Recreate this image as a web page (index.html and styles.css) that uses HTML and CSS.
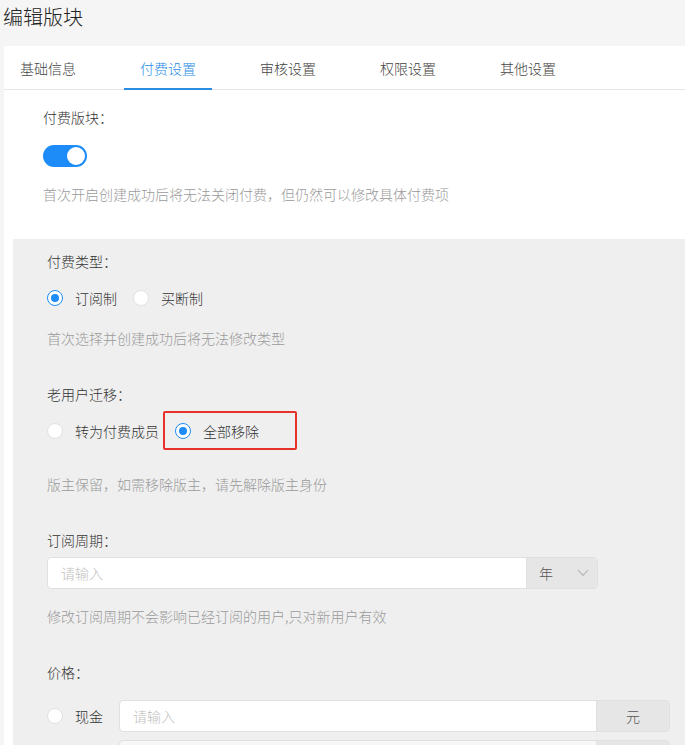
FILE: index.html
```html
<!DOCTYPE html>
<html lang="zh-CN">
<head>
<meta charset="utf-8">
<title>编辑版块</title>
<link rel="stylesheet" href="styles.css">
</head>
<body>
<h1 class="page-title">编辑版块</h1>
<div class="card">
  <nav class="tabs">
    <span class="tab">基础信息</span>
    <span class="tab active">付费设置</span>
    <span class="tab">审核设置</span>
    <span class="tab">权限设置</span>
    <span class="tab">其他设置</span>
  </nav>

  <section class="block-top">
    <div class="label">付费版块：</div>
    <div class="switch on"><span class="knob"></span></div>
    <div class="hint hint-first">首次开启创建成功后将无法关闭付费，但仍然可以修改具体付费项</div>
  </section>

  <section class="block-pay">
    <div class="label">付费类型：</div>
    <div class="radio-row row-type">
      <label class="radio checked"><span class="dot"></span>订阅制</label>
      <label class="radio"><span class="dot"></span>买断制</label>
    </div>
    <div class="hint hint-type">首次选择并创建成功后将无法修改类型</div>

    <div class="label label-gap">老用户迁移：</div>
    <div class="radio-row row-migrate">
      <label class="radio"><span class="dot"></span>转为付费成员</label>
      <label class="radio checked marked"><span class="dot"></span>全部移除</label>
    </div>
    <div class="hint hint-migrate">版主保留，如需移除版主，请先解除版主身份</div>

    <div class="label label-gap">订阅周期：</div>
    <div class="input-group period">
      <div class="input">请输入</div>
      <div class="addon select">年<svg class="chev" viewBox="0 0 12 8" width="12" height="8"><path d="M1 1.2 L6 6.5 L11 1.2" fill="none" stroke="#b5b5b5" stroke-width="1.1"/></svg></div>
    </div>
    <div class="hint hint-period">修改订阅周期不会影响已经订阅的用户,只对新用户有效</div>

    <div class="label label-gap">价格：</div>
    <div class="price-row">
      <label class="radio"><span class="dot"></span>现金</label>
      <div class="input-group price">
        <div class="input">请输入</div>
        <div class="addon unit">元</div>
      </div>
    </div>
    <div class="price-row next-row">
      <div class="input-group price">
        <div class="input"></div>
        <div class="addon unit"></div>
      </div>
    </div>
  </section>
</div>
</body>
</html>
```
FILE: styles.css
```css
html, body {
  margin: 0;
  padding: 0;
  background: #f5f5f5;
  font-family: "Noto Sans CJK SC", "Noto Sans", sans-serif;
  font-weight: 300;
  color: #333;
  overflow: hidden;
  height: 745px;
}

.page-title {
  margin: 0;
  height: 46px;
  padding-left: 3px;
  font-size: 20px;
  font-weight: 300;
  line-height: 33px;
  color: #222;
}

.card {
  margin-left: 4px;
  background: #fff;
  height: 699px;
  overflow: hidden;
}

/* tab strip */
.tabs {
  display: flex;
  gap: 32px;
  height: 43px;
  border-bottom: 1px solid #e6e6e6;
}
.tab {
  width: 88px;
  text-align: center;
  font-size: 14px;
  line-height: 44px;
  color: #444;
  box-sizing: border-box;
}
.tab.active {
  color: #2b8de6;
  border-bottom: 2px solid #2b8de6;
  height: 44px;
  line-height: 44px;
}

.label {
  font-size: 14px;
  line-height: 20px;
  color: #333;
}
.hint {
  font-size: 14px;
  line-height: 20px;
  color: #9a9a9a;
}

.block-top {
  padding: 17px 0 35px 39px;
}
.switch {
  margin-top: 18px;
  width: 44px;
  height: 22px;
  border-radius: 11px;
  background: #1d8cf8;
  position: relative;
}
.switch .knob {
  position: absolute;
  top: 2px;
  right: 2px;
  width: 18px;
  height: 18px;
  border-radius: 50%;
  background: #fff;
}
.hint-first {
  margin-top: 17px;
}

/* grey settings panel */
.block-pay {
  margin-left: 9px;
  background: #efefef;
  padding: 12px 0 20px 34px;
}

.label-gap {
  margin-top: 36px;
}

.radio-row {
  display: flex;
  align-items: center;
}
.row-type {
  margin-top: 17px;
  height: 20px;
  gap: 16px;
}
.row-migrate {
  margin-top: 7px;
  height: 39px;
  gap: 4px;
}

.radio {
  display: flex;
  align-items: center;
  font-size: 14px;
  line-height: 20px;
  color: #333;
}
.radio .dot {
  width: 14px;
  height: 14px;
  border: 1px solid #e2e2e2;
  border-radius: 50%;
  background: #fff;
  margin-right: 12px;
  position: relative;
  flex: none;
}
.radio.checked .dot {
  border-color: #1d8cf8;
}
.radio.checked .dot::after {
  content: "";
  position: absolute;
  left: 3px;
  top: 3px;
  width: 8px;
  height: 8px;
  border-radius: 50%;
  background: #1d8cf8;
}
.radio.marked {
  height: 39px;
  width: 134px;
  box-sizing: border-box;
  border: 2px solid #e5322b;
  border-radius: 2px;
  padding-left: 10px;
}

.hint-type {
  margin-top: 20px;
}
.hint-migrate {
  margin-top: 24px;
}
.hint-period {
  margin-top: 17px;
}

.input-group {
  display: flex;
  height: 32px;
  border: 1px solid #e0e0e0;
  border-radius: 4px;
  overflow: hidden;
  box-sizing: border-box;
  background: #fff;
}
.input {
  flex: 1;
  padding-left: 13px;
  font-size: 14px;
  line-height: 30px;
  color: #c0c0c0;
}
.addon {
  background: #e6e6e6;
  font-size: 14px;
  line-height: 30px;
  color: #555;
  border-left: 1px solid #e0e0e0;
}

.period {
  margin-top: 7px;
  width: 551px;
}
.select {
  width: 71px;
  padding-left: 12px;
  box-sizing: border-box;
  display: flex;
  align-items: center;
  gap: 24px;
}

.price-row {
  display: flex;
  align-items: center;
  margin-top: 18px;
  gap: 16px;
}
.price {
  width: 551px;
}
.unit {
  width: 72px;
  text-align: center;
}
.next-row {
  margin-top: 8px;
  padding-left: 72px;
}
.next-row .price {
  background: #f7f7f7;
}
```
